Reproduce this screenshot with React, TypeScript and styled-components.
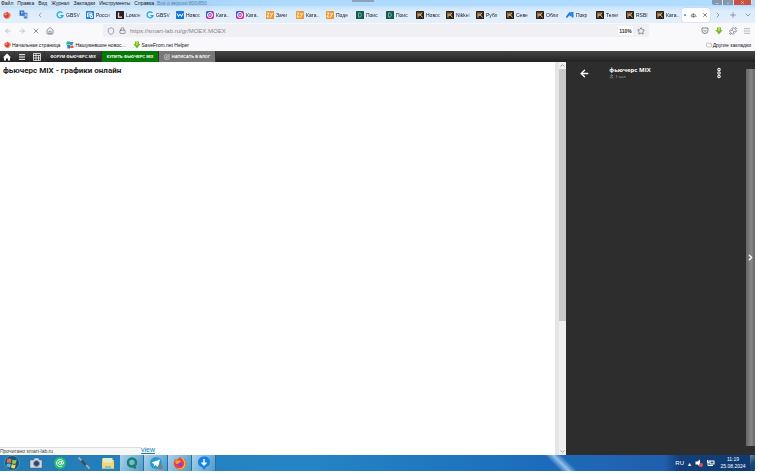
import React from "react";
import styled, { createGlobalStyle } from "styled-components";
import {
  ArrowLeft, ArrowRight, X, House, Shield, Lock, Star, Plus, ChevronDown, ChevronUp,
  ChevronRight, ChevronLeft, Menu, Folder, Puzzle, User, SquarePen, EllipsisVertical,
} from "lucide-react";

const Global = createGlobalStyle`
  * { box-sizing: border-box; }
  body { margin: 0; background: #fff; font-family: "Liberation Sans", sans-serif; font-size: 6px; color: #15141a; }
  button, input { font: inherit; color: inherit; border: 0; padding: 0; margin: 0; background: none; }
  svg { display: block; flex: none; }
  a { color: inherit; text-decoration: none; }
`;

const Desktop = styled.div`
  height: calc(100vh - 3px);
  margin-right: 3px;
  display: flex;
  flex-direction: column;
  overflow: hidden;
`;
const MenuBar = styled.div`
  height: 6px;
  display: flex;
  align-items: flex-end;
  font-size: 5px;
  line-height: 6px;
  background:
    linear-gradient(#8ba3b8, #8ba3b8) 48% 0 / 22px 2px no-repeat,
    linear-gradient(90deg, #d6e8f8 0, #cae2f8 140px, #9ecbf2 165px, #addafc 240px, #b0dcff 100%);
`;
const MenuItems = styled.nav`
  display: flex;
  gap: 4px;
  padding-left: 1px;
`;
const MenuItem = styled.button`
  white-space: nowrap;
  line-height: 6px;
  &::first-letter { text-decoration: underline; }
`;
const WindowTitle = styled.span`
  margin-left: 3px;
  flex: 1;
  color: #5d87ab;
`;
const WindowButtons = styled.div`
  display: flex;
  align-self: flex-start;
  margin-right: 3px;
  border-radius: 0 0 2px 2px;
  overflow: hidden;
`;
const WindowButton = styled.button<{ $close?: boolean }>`
  width: ${(p) => (p.$close ? 18 : 11)}px;
  height: 5px;
  display: grid;
  place-items: center;
  color: #fff;
  background: ${(p) => (p.$close ? "#ca5144" : "#8397ad")};
  border-right: 1px solid #d6e4f1;
`;
const TabStrip = styled.div`
  height: 17px;
  display: flex;
  align-items: center;
  background: linear-gradient(#c3e1fc, #dcecfb 30%, #e4effb);
`;
const Pinned = styled.div`
  width: 52px;
  display: flex;
  align-items: center;
  gap: 8px;
  padding-left: 3px;
  color: #7d8794;
`;
const Tabs = styled.div`
  flex: 1;
  min-width: 0;
  display: flex;
`;
const Tab = styled.button`
  flex: 1;
  min-width: 0;
  height: 14px;
  padding-left: 4px;
  display: flex;
  align-items: center;
  gap: 2px;
`;
const TabText = styled.span`
  flex: 1;
  text-align: left;
  font-size: 5px;
  white-space: nowrap;
  mask-image: linear-gradient(90deg, #000 55%, #0006 100%);
`;
const ActiveTab = styled.button`
  width: 28px;
  height: 14px;
  display: flex;
  align-items: center;
  justify-content: space-around;
  background: #fff;
  border-radius: 2px;
  box-shadow: 0 0 1px #8797a8;
`;
const Dot = styled.span`
  width: 2px;
  height: 2px;
  border-radius: 50%;
  background: #3988cf;
`;
const TabTools = styled.div`
  width: 45px;
  display: flex;
  justify-content: space-around;
  color: #66727f;
`;
const IconButton = styled.button`
  display: grid;
  place-items: center;
`;
const NavBar = styled.div`
  height: 15px;
  display: flex;
  align-items: center;
  background: #f9f9fb;
  color: #5b5b66;
`;
const NavButtons = styled.div`
  flex: 0 0 103px;
  display: flex;
  gap: 6px;
  padding-left: 4px;
`;
const Address = styled.label`
  flex: 1;
  height: 13px;
  display: flex;
  align-items: center;
  gap: 4px;
  padding: 0 4px;
  background: #f0f0f4;
  border-radius: 2px;
`;
const AddressInput = styled.input`
  flex: 1;
  min-width: 0;
  color: #85858e;
  outline: 0;
`;
const Zoom = styled.button`
  width: 15px;
  height: 9px;
  font-size: 5px;
  font-weight: bold;
  color: #333;
  background: #fff;
`;
const NavTools = styled.div`
  flex: 0 0 106px;
  display: flex;
  justify-content: flex-end;
  gap: 6px;
  padding-right: 4px;
`;
const Bookmarks = styled.nav`
  height: 13px;
  display: flex;
  align-items: center;
  gap: 6px;
  padding: 0 4px;
  font-size: 5px;
  background: #f9f9fb;
`;
const BookmarkLink = styled.a<{ $end?: boolean }>`
  display: flex;
  align-items: center;
  gap: 1px;
  white-space: nowrap;
  margin-left: ${(p) => (p.$end ? "auto" : 0)};
`;
const SiteBar = styled.nav`
  height: 11px;
  display: flex;
  background: linear-gradient(#454545, #222);
  color: #fff;
`;
const siteBackground = { buy: "#067806", write: "#777", icon: "none", text: "none" };
const SiteLink = styled.a<{ $kind: keyof typeof siteBackground }>`
  flex: none;
  display: flex;
  align-items: center;
  justify-content: center;
  gap: 2px;
  width: ${(p) => (p.$kind === "icon" ? 15 : 57)}px;
  font-size: 4px;
  font-weight: bold;
  white-space: nowrap;
  background: ${(p) => siteBackground[p.$kind]};
  border-right: 1px solid #333;
`;
const Content = styled.div`
  flex: 1;
  min-height: 0;
  display: flex;
`;
const Page = styled.main`
  flex: 1;
  display: flex;
  flex-direction: column;
  justify-content: space-between;
  background: #fff;
`;
const Heading = styled.h1`
  margin: 0;
  padding: 4px 3px;
  font: bold 8px/10px Roboto, sans-serif;
  color: #222;
`;
const PageFoot = styled.div`
  display: flex;
  align-items: flex-end;
  height: 9px;
`;
const Status = styled.div`
  width: 141px;
  height: 8px;
  line-height: 7px;
  background: #f7f7f8;
  border-top: 1px solid #ddd;
  color: #444;
  font-size: 5px;
`;
const ViewLink = styled.a`
  align-self: flex-start;
  font-size: 7px;
  line-height: 7px;
  color: #1678ae;
  text-decoration: underline;
`;
const ScrollTrack = styled.div`
  width: 11px;
  display: flex;
  flex-direction: column;
  align-items: center;
  background: #f0f0f0;
  border-left: 4px solid #e5e5e5;
  color: #666;
`;
const ScrollSpace = styled.div`
  flex: 1;
  width: 100%;
`;
const ScrollThumb = styled.div`
  height: 64%;
  width: 100%;
  background: #c9c9c9;
`;
const Chat = styled.aside`
  width: 25%;
  display: flex;
  background: #2d2d2d;
  color: #fff;
`;
const ChatHead = styled.header`
  flex: 1;
  height: 22px;
  display: flex;
  align-items: center;
  padding: 0 21px 0 13px;
`;
const ChatTitle = styled.div`
  flex: 1;
  padding-left: 19px;
  font: bold 6px/7px "Open Sans", sans-serif;
`;
const ChatUsers = styled.div`
  display: flex;
  align-items: center;
  gap: 1px;
  font-size: 4px;
  line-height: 5px;
  font-weight: normal;
  color: #bbb;
`;
const ChatHandle = styled.button`
  width: 9px;
  margin: 7px 0 9px;
  display: grid;
  place-items: center;
  background: linear-gradient(90deg, #666, #858585 60%, #666);
`;
const Taskbar = styled.footer`
  height: 16px;
  display: flex;
  align-items: center;
  color: #fff;
  background: linear-gradient(90deg, #247bb5, #2585c4 40%, #1c6cbb 72%, #215fac 88%, #123f7a 90%, #0d3b70);
`;
const TaskButton = styled.button<{ $open?: boolean }>`
  width: 24px;
  height: 16px;
  display: grid;
  place-items: center;
  background: ${(p) => (p.$open ? "linear-gradient(120deg, #acd1e9, #4d9bcc)" : "none")};
  border-right: 1px solid ${(p) => (p.$open ? "#276fa1" : "transparent")};
`;
const LightBeam = styled.div`
  flex: 1;
  height: 16px;
  background: linear-gradient(45deg, #0000 calc(50% - 6px), #aed4f4cc 50%, #0000 calc(50% + 6px)) right 98px top / 32px 16px no-repeat;
`;
const Tray = styled.div`
  display: flex;
  align-items: center;
  gap: 4px;
`;
const Clock = styled.time`
  width: 28px;
  margin-right: 3px;
  text-align: center;
  font-size: 5px;
  line-height: 7px;
`;
const ShowDesktop = styled.button`
  align-self: stretch;
  width: 5px;
  background: linear-gradient(135deg, #6588aa, #174576 55%);
`;

function Firefox({ size = 8 }: { size?: number }) {
  return (
    <svg width={size} height={size} viewBox="0 0 16 16">
      <path d="M8 1c1 2 3 2 4 4l1-2c2 3 3 6 1 9-3 5-10 4-12 0C0 9 1 5 3 3v2c2-2 4-2 5-4z" fill="#f04438" />
      <path d="M10 2c5 2 6 9 2 12-3 2-7 1-9-1 4 2 8 1 9-2 2-3 0-6-2-9z" fill="#ffba28" />
      <circle cx="8" cy="9" r="3" fill="#8c40c8" />
      <path d="M2 6c4-2 7-1 7 1-3 0-2 3-5 2z" fill="#ff9b27" />
    </svg>
  );
}

function Favicon({ kind }: { kind: string }) {
  const fill: Record<string, string> = { R: "#2681d5", L: "#2b2021", V: "#1478de", O: "#ed9636", D: "#17594f", H: "#2a211a" };
  return (
    <svg width="8" height="8" viewBox="0 0 16 16" fill="none">
      {fill[kind] && <rect width="16" height="16" rx="1" fill={fill[kind]} />}
      {kind === "G" && <path d="M13 4a6 6 0 1 0 1 5H9" stroke="#18a6dc" strokeWidth="2.5" />}
      {kind === "R" && <path d="M3 12V4h9v3H6v5m3-3h4v4H9z" stroke="#e8f6ff" strokeWidth="2" />}
      {kind === "L" && <path d="M5 3v9h7" stroke="#f3d6cf" strokeWidth="2.5" />}
      {kind === "V" && <path d="M2 5l3 6 3-5 3 5 3-6" stroke="#fff" strokeWidth="2" />}
      {kind === "P" && (
        <>
          <rect width="16" height="16" rx="4" fill="#d52b91" />
          <path d="M0 4q0-4 4-4h10L0 14z" fill="#355de3" />
          <circle cx="8" cy="8" r="5" stroke="#fff" strokeWidth="2" />
          <path d="M5 8h6" stroke="#fff" strokeWidth="2" />
        </>
      )}
      {kind === "O" && <path d="M2 4h4L2 12h5m2-8 2 4 3-4m-3 4-2 5" stroke="#fff4d5" strokeWidth="2" />}
      {kind === "D" && <path d="M5 4h4q4 4 0 8H5z" stroke="#73b69e" strokeWidth="2" />}
      {kind === "H" && <path d="M4 3v10m0-5h4m0-5v7m4-7-3 5 4 5" stroke="#edb879" strokeWidth="2" />}
      {kind === "A" && <path d="M1 13 7 5l3 5m-1-6h4v9" stroke="#297de1" strokeWidth="4" />}
    </svg>
  );
}

function Translate() {
  return (
    <svg width="9" height="9" viewBox="0 0 16 16">
      <path d="M1 1h8l2 9H1z" fill="#2867bd" /><path d="M7 5h8v10H9z" fill="#4d86d5" />
      <path d="M3 4h5M5 3v5M10 12l2-5 2 5" stroke="#fff" fill="none" />
    </svg>
  );
}

function Pocket() {
  return (
    <svg width="8" height="8" viewBox="0 0 16 16" fill="none" stroke="#5b5b66" strokeWidth="1.5">
      <path d="M2 2h12v5a6 6 0 0 1-12 0zM5 6l3 3 3-3" />
    </svg>
  );
}

function Helper() {
  return (
    <svg width="8" height="8" viewBox="0 0 16 16">
      <path d="M4 1h8v5h3l-7 9-7-9h3z" fill="#71b92f" /><path d="M6 2h4v6H6z" fill="#b2dd40" />
    </svg>
  );
}

function Colors() {
  return (
    <svg width="8" height="8" viewBox="0 0 16 16">
      <path d="M2 1h6v6H0z" fill="#24b68d" /><path d="M8 2h7l-2 6H8z" fill="#3094d0" />
      <path d="M2 8h6v7H3z" fill="#2685c7" /><path d="M9 9h6v5H8z" fill="#e65649" />
    </svg>
  );
}

function Board() {
  return (
    <svg width="8" height="8" viewBox="0 0 16 16" fill="none" stroke="#fff" strokeWidth="1.5">
      <path d="M1 1h14v14H1zM1 5h14M6 1v14M11 5v10M1 10h14" />
    </svg>
  );
}

function HomeSolid() {
  return (
    <svg width="8" height="8" viewBox="0 0 16 16">
      <path d="m8 1 8 8h-2v6h-4v-4H6v4H2V9H0z" fill="#fff" />
    </svg>
  );
}

function Windows() {
  return (
    <svg width="16" height="16" viewBox="0 0 30 30">
      <circle cx="15" cy="15" r="14" fill="#175682" stroke="#80bad4" />
      <path d="M6 8q4-3 8 0l-1 7q-4-2-8 0z" fill="#ef6d38" /><path d="M16 9q4 2 8-1l-2 8q-4 2-7-1z" fill="#91c94c" />
      <path d="M5 17q4-2 8 0l-2 7q-3-2-6-1z" fill="#53b8e9" /><path d="M15 17q3 3 7 1l-2 7q-4 1-7-2z" fill="#ffd34f" />
    </svg>
  );
}

function TaskIcon({ kind }: { kind: string }) {
  return (
    <svg width="14" height="14" viewBox="0 0 28 28" fill="none">
      {kind === "camera" && <><path d="M2 8h7l2-4h8l2 4h5v16H2z" fill="#d2d9e3" stroke="#4b5d7d" /><circle cx="15" cy="15" r="6" fill="#334466" stroke="#929eb5" strokeWidth="2" /></>}
      {kind === "mail" && <><circle cx="14" cy="14" r="12" fill="#28bf70" /><circle cx="14" cy="14" r="3" stroke="#fff" strokeWidth="2" /><path d="M17 10v6q4 2 4-3a7 7 0 1 0-3 7" stroke="#fff" strokeWidth="2" /></>}
      {kind === "mic" && <><path d="m5 5 17 18" stroke="#3c4c5c" strokeWidth="5" /><path d="m3 3 6 6m9 9 7 7" stroke="#9dabb7" strokeWidth="4" /></>}
      {kind === "folder" && <><path d="M2 5h8l2 3h14v17H2z" fill="#edc867" /><path d="M4 4h19v14H4z" fill="#dfedcb" /><path d="M2 13h24v12H2z" fill="#f2d779" /><path d="M8 20h12v5H8z" fill="#8bbcca" /></>}
      {kind === "Q" && <><circle cx="14" cy="13" r="8" stroke="#16816d" strokeWidth="5" /><path d="m16 18 5 7" stroke="#16816d" strokeWidth="5" /></>}
      {kind === "telegram" && <><circle cx="14" cy="14" r="12" fill="#259bd1" /><path d="m5 13 17-6-4 15-5-4-3 3v-5z" fill="#fff" /><circle cx="23" cy="22" r="5" fill="#73838d" /></>}
      {kind === "download" && <><path d="M14 1c7 0 12 4 12 11s-5 9-8 10l-4 6-4-6C5 21 2 18 2 12S7 1 14 1z" fill="#1482e5" /><path d="M14 6v12m-5-5 5 5 5-5" stroke="#fff" strokeWidth="3" /></>}
    </svg>
  );
}

const tabs = [
  ["G", "GBSV"], ["R", "Росси"], ["L", "Lомон"], ["G", "GBSV"], ["V", "Новос"], ["P", "Ката.."], ["P", "Ката.."],
  ["O", "Зачи"], ["O", "Ката.."], ["O", "Поде"], ["D", "Поис"], ["D", "Поис"], ["H", "Новос"], ["H", "Nikkei"],
  ["H", "Рубл"], ["H", "Севе"], ["H", "Обли"], ["A", "Покр"], ["H", "Телег"], ["H", "RSBI"], ["H", "Ката.."],
];

export default function App() {
  return (
    <>
      <Global />
      <Desktop>
        <MenuBar>
          <MenuItems>
            {["Файл", "Правка", "Вид", "Журнал", "Закладки", "Инструменты", "Справка"].map((m) => <MenuItem key={m}>{m}</MenuItem>)}
          </MenuItems>
          <WindowTitle>Все о версии 800/850</WindowTitle>
          <WindowButtons>
            <WindowButton aria-label="Свернуть">–</WindowButton>
            <WindowButton aria-label="Развернуть">▫</WindowButton>
            <WindowButton $close aria-label="Закрыть"><X size={5} /></WindowButton>
          </WindowButtons>
        </MenuBar>
        <TabStrip>
          <Pinned><Firefox /><Translate /><ChevronLeft size={8} /></Pinned>
          <Tabs>{tabs.map(([kind, text], i) => <Tab key={i}><Favicon kind={kind} /><TabText>{text}</TabText></Tab>)}</Tabs>
          <ActiveTab><Dot />ф. <X size={6} /></ActiveTab>
          <TabTools>
            <IconButton aria-label="Вперёд"><ChevronRight size={8} /></IconButton>
            <IconButton aria-label="Новая вкладка"><Plus size={8} /></IconButton>
            <IconButton aria-label="Все вкладки"><ChevronDown size={8} /></IconButton>
          </TabTools>
        </TabStrip>
        <NavBar>
          <NavButtons>
            <IconButton aria-label="Назад"><ArrowLeft size={8} color="#b0b0b5" /></IconButton>
            <IconButton aria-label="Вперёд"><ArrowRight size={8} color="#b0b0b5" /></IconButton>
            <IconButton aria-label="Стоп"><X size={8} /></IconButton>
            <IconButton aria-label="Домой"><House size={8} /></IconButton>
          </NavButtons>
          <Address>
            <Shield size={8} color="#7777a2" /><Lock size={7} />
            <AddressInput aria-label="Адрес" defaultValue="https://smart-lab.ru/gr/MOEX.MOEX" />
            <Zoom>110%</Zoom><Star size={8} />
          </Address>
          <NavTools>
            <IconButton aria-label="Pocket"><Pocket /></IconButton>
            <IconButton aria-label="Загрузка"><Helper /></IconButton>
            <IconButton aria-label="Расширения"><Puzzle size={8} /></IconButton>
            <IconButton aria-label="Меню"><Menu size={8} color="#999" /></IconButton>
          </NavTools>
        </NavBar>
        <Bookmarks>
          <BookmarkLink href="#"><Firefox size={7} />Начальная страница</BookmarkLink>
          <BookmarkLink href="#"><Colors />Нашумевшие новос…</BookmarkLink>
          <BookmarkLink href="#"><Helper />SaveFrom.net Helper</BookmarkLink>
          <BookmarkLink href="#" $end><Folder size={6} color="#999" />Другие закладки</BookmarkLink>
        </Bookmarks>
        <SiteBar>
          <SiteLink href="#" $kind="icon" aria-label="Главная"><HomeSolid /></SiteLink>
          <SiteLink href="#" $kind="icon" aria-label="Меню"><Menu size={8} strokeWidth={3} /></SiteLink>
          <SiteLink href="#" $kind="icon" aria-label="Таблица"><Board /></SiteLink>
          <SiteLink href="#" $kind="text">ФОРУМ ФЬЮЧЕРС MIX</SiteLink>
          <SiteLink href="#" $kind="buy">КУПИТЬ ФЬЮЧЕРС MIX</SiteLink>
          <SiteLink href="#" $kind="write"><SquarePen size={6} />НАПИСАТЬ В БЛОГ</SiteLink>
        </SiteBar>
        <Content>
          <Page>
            <Heading>фьючерс MIX - графики онлайн</Heading>
            <PageFoot><Status>Прочитано smart-lab.ru</Status><ViewLink href="#">view</ViewLink></PageFoot>
          </Page>
          <ScrollTrack><ChevronUp size={7} /><ScrollThumb /><ScrollSpace /><ChevronDown size={7} /></ScrollTrack>
          <Chat>
            <ChatHead>
              <IconButton aria-label="Назад"><ArrowLeft size={11} strokeWidth={3} /></IconButton>
              <ChatTitle>фьючерс MIX<ChatUsers><User size={5} />1 чел</ChatUsers></ChatTitle>
              <IconButton aria-label="Ещё"><EllipsisVertical size={12} strokeWidth={5} /></IconButton>
            </ChatHead>
            <ChatHandle aria-label="Свернуть чат"><ChevronRight size={9} strokeWidth={4} /></ChatHandle>
          </Chat>
        </Content>
        <Taskbar>
          <TaskButton aria-label="Пуск"><Windows /></TaskButton>
          {["camera", "mail", "mic", "folder"].map((k) => <TaskButton key={k} aria-label={k}><TaskIcon kind={k} /></TaskButton>)}
          <TaskButton $open aria-label="Поиск"><TaskIcon kind="Q" /></TaskButton>
          <TaskButton $open aria-label="Telegram"><TaskIcon kind="telegram" /></TaskButton>
          <TaskButton $open aria-label="Firefox"><Firefox size={14} /></TaskButton>
          <TaskButton $open aria-label="Загрузки"><TaskIcon kind="download" /></TaskButton>
          <LightBeam />
          <Tray>
            <span>RU</span><span>▴</span>
            <svg width="8" height="8" viewBox="0 0 16 16"><path d="M1 5h4l5-4v14l-5-4H1z" fill="#fff" /><circle cx="12" cy="12" r="4" fill="#e15050" /></svg>
            <svg width="8" height="8" viewBox="0 0 16 16"><path d="M5 3h10v8H5z" fill="#fff" /><path d="M7 5h6v4H7z" fill="#31588a" /><path d="M1 2v5h3V2M2 7v6h10" fill="none" stroke="#fff" strokeWidth="2" /></svg>
            <Clock>11:19<br />25.08.2024</Clock>
          </Tray>
          <ShowDesktop aria-label="Показать рабочий стол" />
        </Taskbar>
      </Desktop>
    </>
  );
}
